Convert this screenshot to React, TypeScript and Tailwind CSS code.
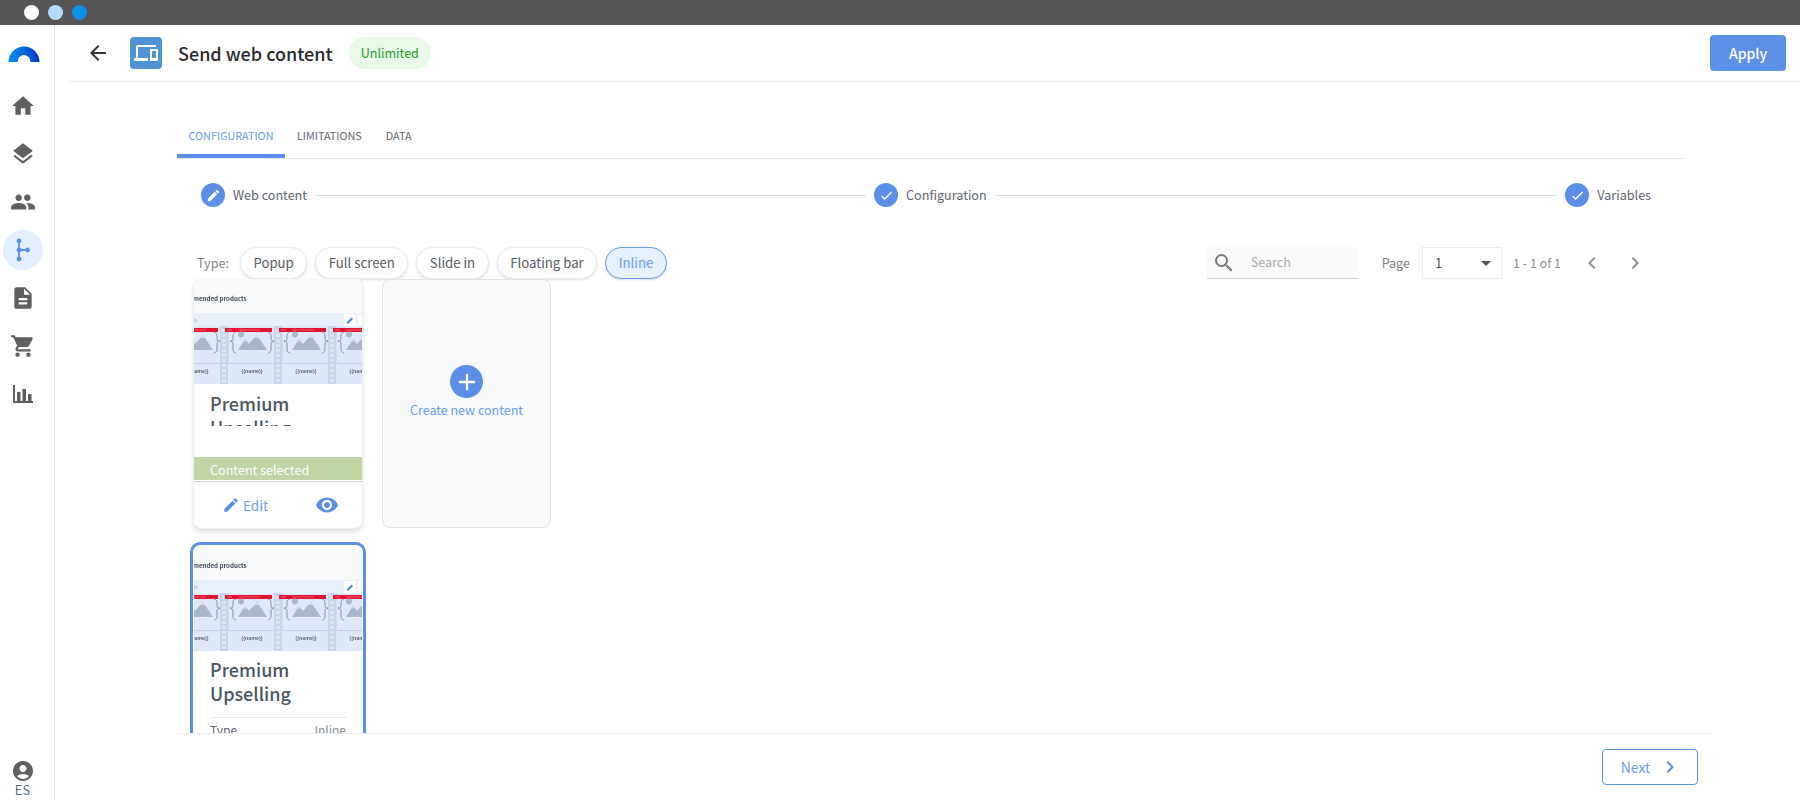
import React from "react";
import {
  MdHome, MdLayers, MdPeople, MdDescription, MdShoppingCart, MdAccountCircle,
  MdEdit, MdVisibility, MdCheck, MdArrowBack, MdChevronLeft, MdChevronRight, MdSearch,
  MdArrowDropDown, MdAdd, MdDevices,
} from "react-icons/md";

function Logo() {
  return (
    <svg width="32" height="17" viewBox="0 0 32 17">
      <defs>
        <linearGradient id="lg" x1="0" x2="1" y1="0" y2="0">
          <stop offset="0" stopColor="#0a90ea" />
          <stop offset="1" stopColor="#0038cc" />
        </linearGradient>
      </defs>
      <path d="M0.5 16 A15.5 15.5 0 0 1 31.5 16 L22.5 16 A6.5 7 0 0 0 9.5 16 Z" fill="url(#lg)" />
    </svg>
  );
}

function FlowIcon() {
  return (
    <svg width="16" height="24" viewBox="0 0 16 24" fill="#5b8fee" stroke="#5b8fee">
      <path d="M4 3 V21 M4 12 H13" strokeWidth="1.8" fill="none" />
      <circle cx="4" cy="3" r="2.4" stroke="none" />
      <circle cx="4" cy="12" r="2.4" stroke="none" />
      <circle cx="4" cy="21" r="2.4" stroke="none" />
      <circle cx="12.5" cy="12" r="2.4" stroke="none" />
    </svg>
  );
}

function ChartIcon() {
  return (
    <svg width="20" height="18" viewBox="0 0 20 18" fill="currentColor">
      <path d="M0 0 H2 V16 H20 V18 H0 Z" />
      <rect x="4" y="7" width="3.5" height="9" />
      <rect x="9.5" y="4" width="3.5" height="12" />
      <rect x="15" y="9" width="3.5" height="7" />
    </svg>
  );
}

function Thumb() {
  const cells = [-23, 31, 85, 139];
  return (
    <svg width="168" height="105" viewBox="0 0 168 105" className="block shrink-0 blur-[0.35px]">
      <rect width="168" height="34" fill="#f8f9fb" />
      <text x="-1" y="21.5" fontSize="6.2" fontWeight="700" fill="#414b57" fontFamily="'Noto Sans CJK SC', sans-serif">mended products</text>
      <rect y="34" width="168" height="71" fill="#dfe8f9" />
      <rect y="34" width="168" height="13" fill="#e9f0fb" />
      <text x="0" y="43" fontSize="4" fill="#9aa3ad" fontFamily="'Noto Sans CJK SC', sans-serif">ts</text>
      <rect x="150" y="35" width="12" height="12" fill="#ffffff" />
      <path d="M153 44.5 L153 43 L157.5 38.5 L159 40 L154.5 44.5 Z" fill="#4d84e8" />
      <rect x="164" y="35" width="4" height="12" fill="#ffffff" />
      <rect y="84" width="168" height="1" fill="#c3cfe2" />
      {cells.map((x) => (
        <g key={x}>
          <rect x={x - 5} y="47" width="8" height="58" fill="#c9d5e6" />
          {[50, 55, 60, 65, 70, 75, 80, 85, 90, 95, 100].map((y) => (
            <rect key={y} x={x - 3} y={y} width="4" height="3" fill="#dbe4f1" />
          ))}
          <rect x={x + 3} y="47" width="1" height="38" fill="#d0dbec" />
          <rect x={x} y="49" width="47" height="4" fill="#e2132f" />
          <rect x={x + 2} y="50.5" width="5" height="1" fill="#ee6a7c" />
          <rect x={x + 13} y="50.5" width="22" height="1" fill="#ea5a6e" />
          <circle cx={x + 16} cy="55.5" r="3" fill="#aab7ca" />
          <path d={`M${x + 13} 71 L${x + 20} 60 L${x + 24} 65 L${x + 32} 56 L${x + 42} 71 Z`} fill="#aab7ca" />
          <path d={`M${x + 29.5} 59 L${x + 32} 56 L${x + 34.5} 59 Z M${x + 18.5} 62.5 L${x + 20} 60 L${x + 22} 62.5 Z`} fill="#d5dded" />
          <path d={`M${x + 11} 53 C${x + 7} 53 ${x + 8} 60 ${x + 8} 61 C${x + 8} 62 ${x + 5} 62 ${x + 5} 62 C${x + 5} 62 ${x + 8} 63 ${x + 8} 64 L${x + 8} 70 C${x + 8} 74 ${x + 11} 74 ${x + 11} 74`} fill="none" stroke="#7d8896" strokeWidth="0.9" />
          <path d={`M${x + 43} 53 C${x + 47} 53 ${x + 46} 60 ${x + 46} 61 C${x + 46} 62 ${x + 49} 62 ${x + 49} 62 C${x + 49} 62 ${x + 46} 63 ${x + 46} 64 L${x + 46} 70 C${x + 46} 74 ${x + 43} 74 ${x + 43} 74`} fill="none" stroke="#7d8896" strokeWidth="0.9" />
          <text x={x + 27} y="94" textAnchor="middle" fontSize="5" fontWeight="700" fill="#5d6775" fontFamily="'Noto Sans CJK SC', sans-serif">{"{{name}}"}</text>
        </g>
      ))}
    </svg>
  );
}

function Step({ icon, label }: { icon: React.ReactNode; label: string }) {
  return (
    <div className="flex items-center gap-[8px] shrink-0">
      <div className="w-[24px] h-[24px] rounded-full bg-[#5b8fe8] flex items-center justify-center text-white">{icon}</div>
      <span className="text-[12.6px] text-[#5f666e]">{label}</span>
    </div>
  );
}

function Pill({ label, active }: { label: string; active?: boolean }) {
  return (
    <div
      className={
        active
          ? "h-[32px] px-[12.5px] rounded-full border border-[#6b9bee] bg-[#e6f1ff] text-[#6b9bee] text-[13.2px] flex items-center shadow-sm"
          : "h-[32px] px-[12.5px] rounded-full border border-[#ececec] bg-white text-[#555b62] text-[13.2px] flex items-center shadow-sm"
      }
    >
      {label}
    </div>
  );
}

const navIcons = [MdHome, MdLayers, MdPeople];

export default function App() {
  return (
    <div className="w-[1800px] h-[800px] flex flex-col overflow-hidden bg-white font-['Noto_Sans_CJK_SC','Liberation_Sans',sans-serif]">
      <div className="h-[25px] bg-[#555555] flex items-center gap-[9px] pl-[24px] shrink-0">
        <div className="w-[15px] h-[15px] rounded-full bg-white" />
        <div className="w-[15px] h-[15px] rounded-full bg-[#b3dcfb]" />
        <div className="w-[15px] h-[15px] rounded-full bg-[#0d8fe8]" />
      </div>
      <div className="flex flex-1 min-h-0">
        <aside className="w-[55px] border-r-[1.5px] border-[#e0e0e0] flex flex-col items-center shrink-0 pr-[9px]">
          <div className="flex flex-col items-center pl-[3px] mt-[21px]">
            <Logo />
          </div>
          <div className="flex flex-col items-center gap-[22px] mt-[30px] text-[#5f5f5f]">
            {navIcons.map((I, i) => (
              <I key={i} size={26} />
            ))}
          </div>
          <div className="w-[40px] h-[40px] rounded-full bg-[#e3f0ff] flex items-center justify-center mt-[15px]">
            <FlowIcon />
          </div>
          <div className="flex flex-col items-center gap-[22px] mt-[15px] text-[#5f5f5f]">
            <MdDescription size={26} />
            <MdShoppingCart size={26} />
            <div className="h-[26px] flex items-center">
              <ChartIcon />
            </div>
          </div>
          <div className="mt-auto mb-[3px] flex flex-col items-center text-[#5f5f5f]">
            <MdAccountCircle size={24} />
            <span className="text-[13px] leading-[14px] text-[#5c6b7a]">ES</span>
          </div>
        </aside>
        <main className="flex-1 flex flex-col min-w-0">
          <header className="h-[57px] ml-[14px] border-b border-[#ebebeb] flex items-center pl-[17px] pr-[14px] shrink-0">
            <MdArrowBack size={24} className="text-[#333]" />
            <div className="ml-[20px] w-[32px] h-[32px] rounded-[4px] bg-[#4e94d4] flex items-center justify-center text-white">
              <MdDevices size={24} />
            </div>
            <h1 className="ml-[16px] text-[18px] font-medium text-[#2a2a2a]">Send web content</h1>
            <div className="ml-[16px] h-[32px] px-[12px] rounded-full bg-[#e8f9e8] text-[#1f9a1f] text-[12.6px] flex items-center">Unlimited</div>
            <button className="ml-auto w-[76px] h-[36px] rounded-[4px] bg-[#5b8fe8] text-white text-[14px] font-medium">Apply</button>
          </header>
          <div className="flex-1 min-h-0 flex flex-col ml-[122px] w-[1536px] pt-[38px]">
            <div className="w-[1507px] h-[39px] border-b-[1.5px] border-[#e6e6e6] flex text-[10.8px] shrink-0">
              <div className="w-[108px] h-[38px] text-center text-[#6a9cf0] border-b-[4px] border-[#5b8fe8] leading-[30px]">CONFIGURATION</div>
              <div className="ml-[12px] text-[#5f666e] leading-[30px]">LIMITATIONS</div>
              <div className="ml-[24px] text-[#5f666e] leading-[30px]">DATA</div>
            </div>
            <div className="mt-[24px] h-[24px] ml-[24px] w-[1450px] flex items-center gap-[8px] shrink-0">
              <Step icon={<MdEdit size={15} />} label="Web content" />
              <div className="w-[551px] h-px bg-[#d9dcdf]" />
              <Step icon={<MdCheck size={15} />} label="Configuration" />
              <div className="flex-1 h-px bg-[#d9dcdf]" />
              <Step icon={<MdCheck size={15} />} label="Variables" />
            </div>
            <div className="mt-[40px] h-[32px] pl-[20px] pr-[66px] flex items-center shrink-0">
              <span className="text-[12.6px] text-[#7d8287] mr-[11px]">Type:</span>
              <div className="flex items-center gap-[8px]">
                <Pill label="Popup" />
                <Pill label="Full screen" />
                <Pill label="Slide in" />
                <Pill label="Floating bar" />
                <Pill label="Inline" active />
              </div>
              <div className="ml-auto flex items-center">
                <div className="w-[151px] h-[32px] bg-[#fafafa] border-b border-[#cfd5da] flex items-center pl-[5px] text-[#73787d]">
                  <MdSearch size={24} />
                  <span className="ml-[15px] text-[12.6px] text-[#a5a9ad]">Search</span>
                </div>
                <span className="ml-[24px] text-[12.6px] text-[#7d8287]">Page</span>
                <div className="ml-[12px] w-[80px] h-[32px] border border-[#ececec] flex items-center pl-[12px] pr-[3px] text-[13px] text-[#4a5560]">
                  1
                  <MdArrowDropDown size={24} className="ml-auto text-[#4a5560]" />
                </div>
                <span className="ml-[11px] text-[12.5px] text-[#8a8f94] whitespace-nowrap">1 - 1 of 1</span>
                <MdChevronLeft size={24} className="ml-[19px] text-[#8a8f94]" />
                <MdChevronRight size={24} className="ml-[19px] text-[#8a8f94]" />
              </div>
            </div>
            <div className="flex-1 min-h-0 overflow-hidden pl-[17px]">
              <div className="flex gap-[20px]">
                <div className="w-[168px] h-[249px] rounded-[8px] border border-[#eeeeee] overflow-hidden shadow-md bg-white flex flex-col box-content -mx-px -mt-px">
                  <Thumb />
                  <div className="mt-[7px] mx-[16px] h-[35px] overflow-hidden text-[18px] leading-[24px] font-medium text-[#4a5560]">Premium Upselling</div>
                  <div className="mt-[31px] h-[23px] bg-[#c2d6a5] text-white text-[12.6px] leading-[25px] pl-[16px]">Content selected</div>
                  <div className="mt-px h-px bg-[#d0d0d0]" />
                  <div className="flex-1 flex items-center justify-between pl-[28px] pr-[23px] text-[#6a9cf0]">
                    <div className="flex items-center gap-[3px]">
                      <MdEdit size={18} className="text-[#5b8fe8]" />
                      <span className="text-[13.5px]">Edit</span>
                    </div>
                    <MdVisibility size={24} className="text-[#5b8fe8]" />
                  </div>
                </div>
                <div className="w-[169px] h-[249px] rounded-[8px] border border-[#e2e2e2] bg-[#f8f9fb] flex flex-col items-center pt-[85px]">
                  <div className="w-[33px] h-[33px] rounded-full bg-[#5b8fe8] flex items-center justify-center text-white">
                    <MdAdd size={28} />
                  </div>
                  <span className="mt-[3px] text-[12.5px] text-[#6a9cf0]">Create new content</span>
                </div>
              </div>
              <div className="mt-[17px] w-[168px] h-[249px] rounded-[6px] outline-[3px] outline-offset-[1px] outline-solid outline-[#5b8fe8] bg-white overflow-hidden">
                <Thumb />
                <div className="mt-[6px] mx-[16px] text-[18px] leading-[24px] font-medium text-[#4a5560]">Premium Upselling</div>
                <div className="mt-[12px] mx-[16px] h-px bg-[#e6e6e6]" />
                <div className="mx-[16px] flex justify-between text-[12px] leading-[24px]">
                  <span className="text-[#5f666e]">Type</span>
                  <span className="text-[#8a8f94]">Inline</span>
                </div>
              </div>
            </div>
            <div className="h-[67px] border-t-[1.5px] border-[#ececec] flex items-center justify-end pr-[15px] shrink-0">
              <button className="w-[96px] h-[36px] rounded-[4px] border-[1.5px] border-[#5b8fe8] text-[#6a9cf0] text-[14px] flex items-center justify-center gap-[8px] pl-[3px]">
                Next
                <MdChevronRight size={24} className="text-[#5b8fe8]" />
              </button>
            </div>
          </div>
        </main>
      </div>
    </div>
  );
}
